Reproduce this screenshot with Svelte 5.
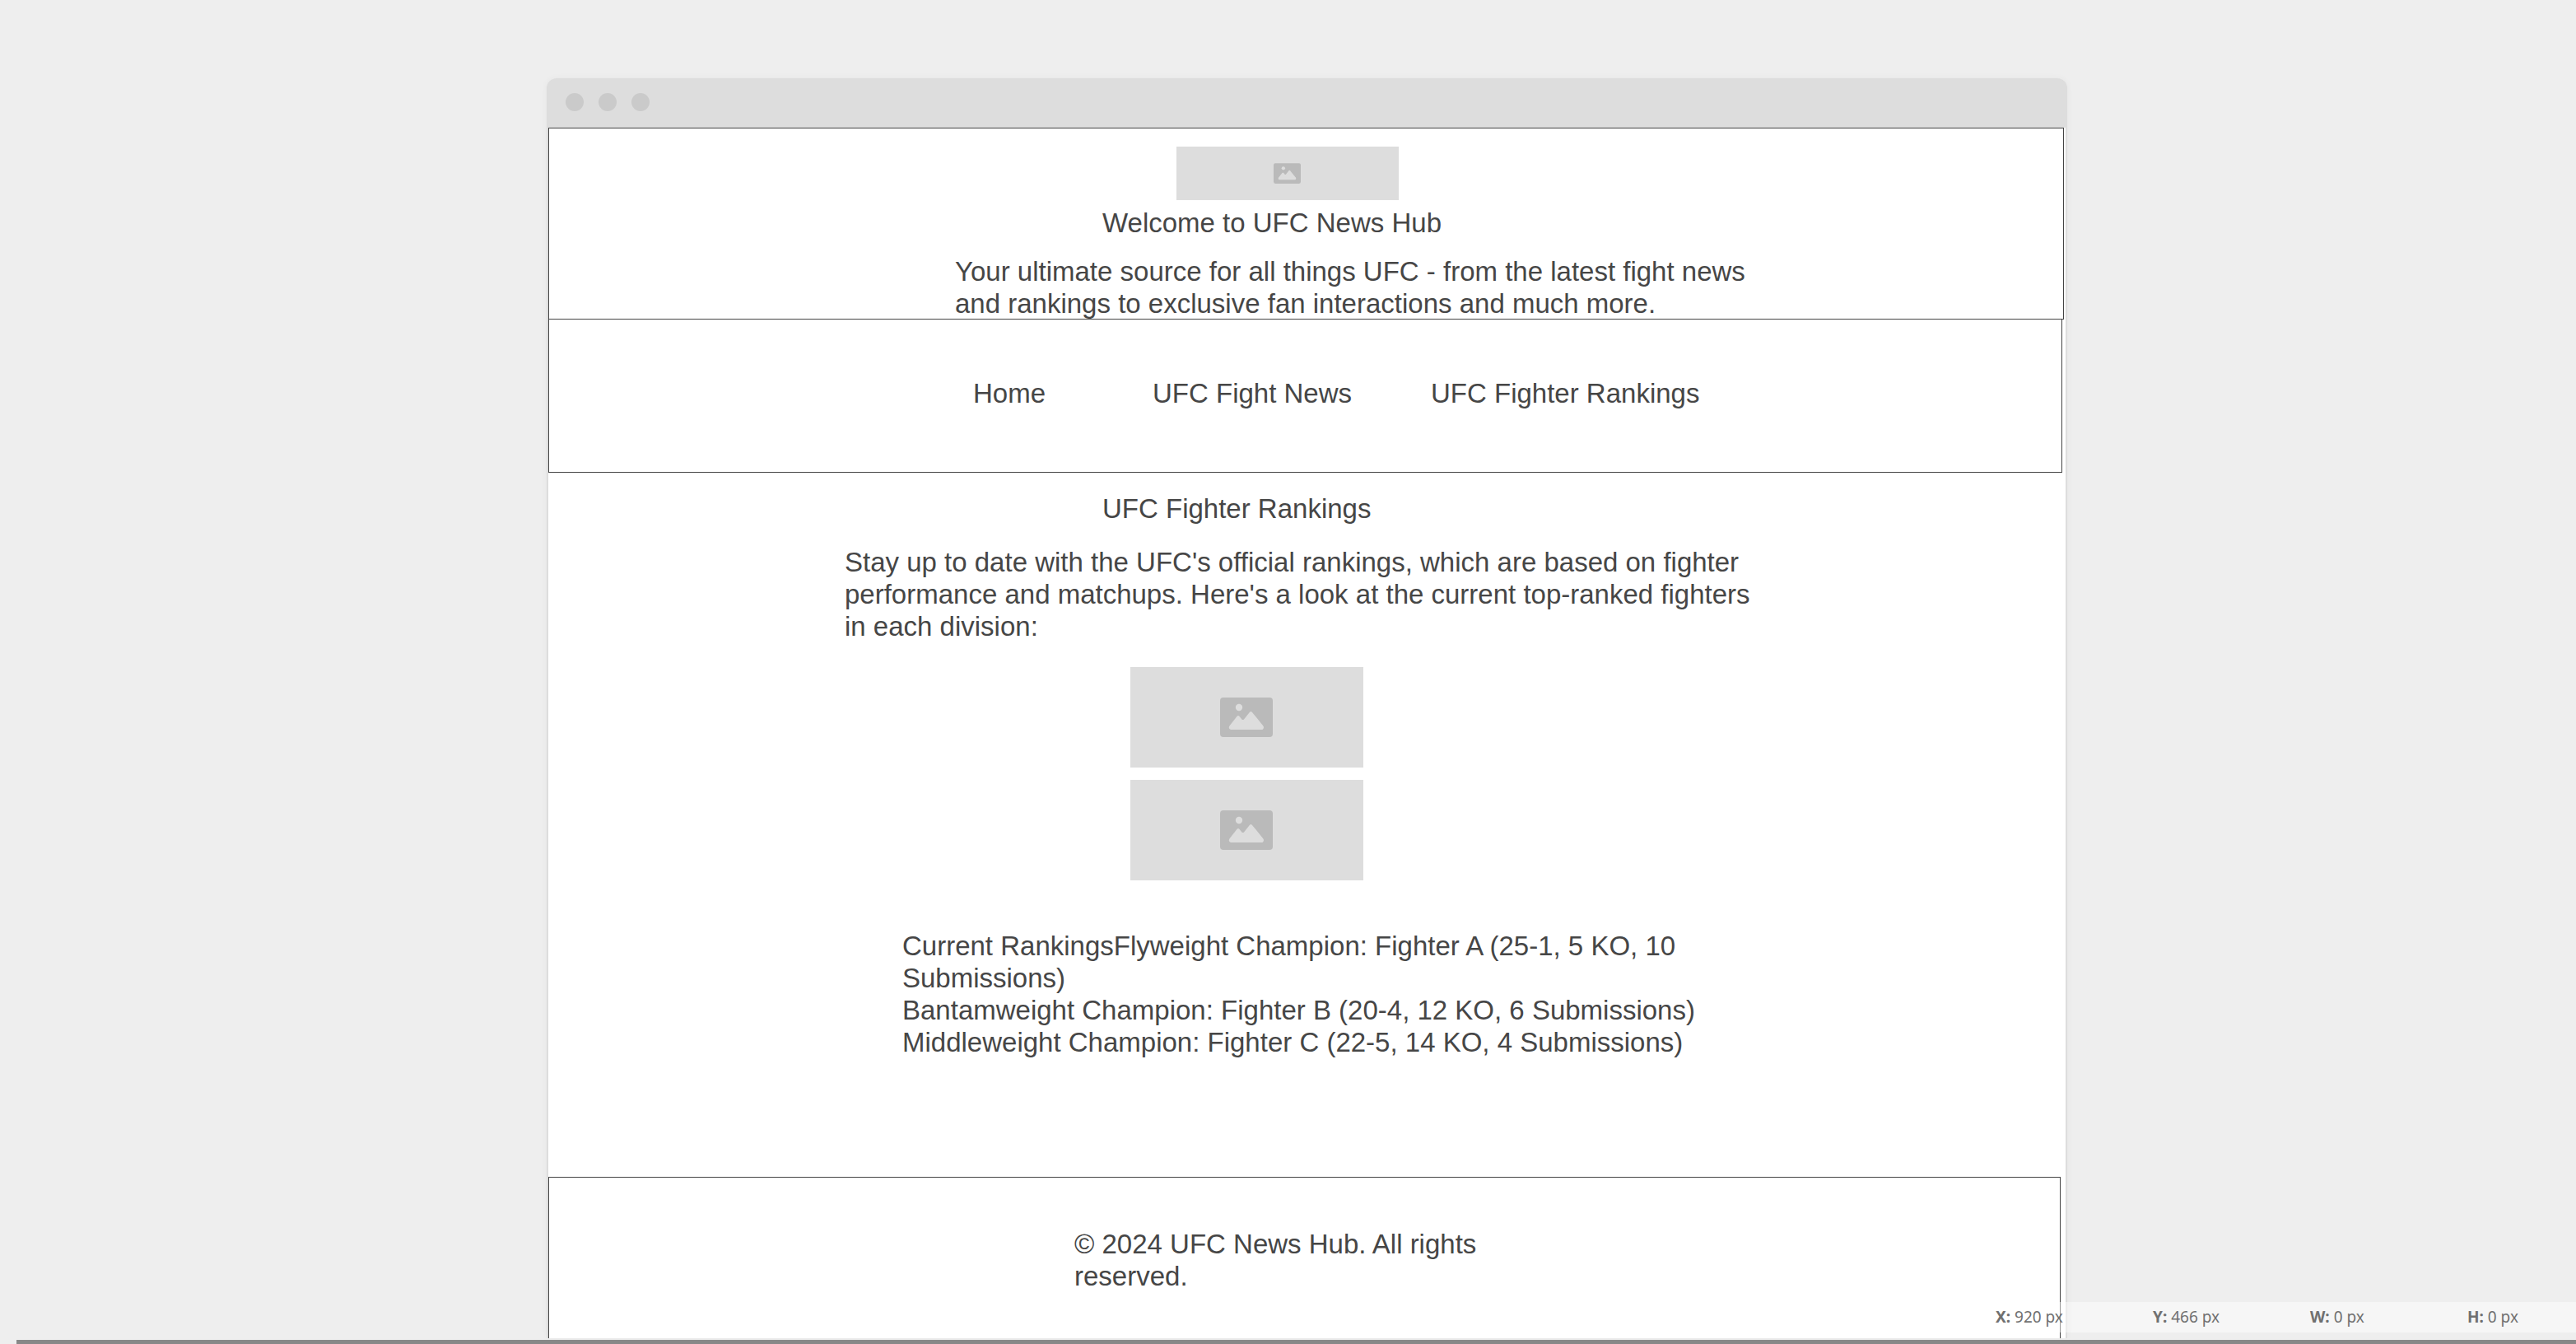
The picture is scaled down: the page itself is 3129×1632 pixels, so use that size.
<script>
  const links = ['Home', 'UFC Fight News', 'UFC Fighter Rankings'];
  const champions = [
    'Current RankingsFlyweight Champion: Fighter A (25-1, 5 KO, 10 Submissions)',
    'Bantamweight Champion: Fighter B (20-4, 12 KO, 6 Submissions)',
    'Middleweight Champion: Fighter C (22-5, 14 KO, 4 Submissions)'
  ];
  const readings = [
    ['X:', '920 px'],
    ['Y:', '466 px'],
    ['W:', '0 px'],
    ['H:', '0 px']
  ];
</script>

{#snippet placeholder(kind)}
  <div class="placeholder {kind}">
    <svg viewBox="0 0 64 48" aria-hidden="true">
      <rect width="64" height="48" rx="4" fill="#bababa" />
      <circle cx="23" cy="12" r="4.2" fill="#dddddd" />
      <path
        d="M11.4 34.4 20.4 23Q22 21 23.6 23L26.4 26.4Q27.7 27.8 29 26.4L35.8 17.9Q37.4 16 39 17.9L52.4 34.4Q54 37 51.4 39H13Q9.6 38 11.4 34.4Z"
        fill="#dddddd"
      />
    </svg>
  </div>
{/snippet}

<div class="page">
  <div class="window">
    <div class="titlebar">
      <span class="dot"></span>
      <span class="dot"></span>
      <span class="dot"></span>
    </div>
    <div class="content">
      <header>
        {@render placeholder('logo')}
        <h1>Welcome to UFC News Hub</h1>
        <p>
          Your ultimate source for all things UFC - from the latest fight news and rankings to
          exclusive fan interactions and much more.
        </p>
      </header>
      <nav>
        {#each links as link}
          <a href="#top">{link}</a>
        {/each}
      </nav>
      <main>
        <h2>UFC Fighter Rankings</h2>
        <p class="intro">
          Stay up to date with the UFC's official rankings, which are based on fighter performance
          and matchups. Here's a look at the current top-ranked fighters in each division:
        </p>
        <div class="gallery">
          {@render placeholder('photo')}
          {@render placeholder('photo')}
        </div>
        <ul>
          {#each champions as champion}
            <li>{champion}</li>
          {/each}
        </ul>
      </main>
      <footer><p>© 2024 UFC News Hub. All rights reserved.</p></footer>
    </div>
  </div>
  <div class="edge"></div>
  <div class="status">
    {#each readings as [name, value]}
      <span><b>{name}</b> {value}</span>
    {/each}
  </div>
</div>

<style>
  :global(body) {
    background: #eeeeee;
  }

  .page {
    position: relative;
    display: flex;
    flex-direction: column;
    box-sizing: border-box;
    min-height: 100vh;
    padding-top: 95px;
    color: #464646;
    font: 33px/39px 'Liberation Sans', Arial, sans-serif;
  }

  .window {
    display: flex;
    flex: 1;
    flex-direction: column;
    margin: 0 618px 2px 664px;
    border-radius: 12px 12px 0 0;
    box-shadow: 0 0 8px rgba(0, 0, 0, 0.04);
  }

  .titlebar {
    display: flex;
    gap: 18px;
    box-sizing: border-box;
    height: 60px;
    padding: 18px 23px;
    border-radius: 12px 12px 0 0;
    background: #dddddd;
  }

  .dot {
    width: 22px;
    height: 22px;
    border-radius: 50%;
    background: #cacaca;
  }

  .content {
    display: flex;
    flex: 1;
    flex-direction: column;
    border: solid #dddddd;
    border-width: 0 2px;
    background: #ffffff;
  }

  h1,
  h2,
  p,
  ul {
    margin: 0;
    padding: 0;
    font-size: inherit;
    font-weight: 400;
    list-style: none;
  }

  header,
  nav,
  footer {
    border: 1px solid #444444;
  }

  header {
    margin-right: 2px;
    padding-top: 22px;
  }

  header h1 {
    margin: 8px 0 20px 672px;
  }

  header p {
    max-width: 990px;
    margin: 0 0 -1px 493px;
  }

  .placeholder {
    display: flex;
    align-items: center;
    justify-content: center;
    box-sizing: border-box;
    padding-right: 1px;
    background: #dddddd;
  }

  .logo {
    width: 270px;
    height: 65px;
    margin-left: 762px;
  }

  .logo svg {
    width: 33px;
    height: 25px;
  }

  .photo {
    width: 283px;
    height: 122px;
  }

  .photo svg {
    width: 64px;
    height: 48px;
  }

  nav {
    display: grid;
    grid-template-columns: 218px 338px auto;
    margin: -1px 4px 0 0;
    padding: 70px 0 76px 515px;
  }

  nav a {
    color: inherit;
    text-decoration: none;
  }

  main {
    flex: 1;
    padding-top: 24px;
  }

  h2 {
    margin-left: 673px;
  }

  .intro {
    max-width: 1120px;
    margin: 26px 0 30px 360px;
  }

  .gallery {
    display: grid;
    gap: 15px;
    margin-left: 707px;
  }

  ul {
    max-width: 990px;
    margin: 60px 0 0 430px;
  }

  footer {
    box-sizing: border-box;
    height: 196px;
    margin-right: 6px;
    padding: 61px 0 0 638px;
    border-bottom: 0;
  }

  footer p {
    max-width: 510px;
  }

  .edge {
    height: 5px;
    margin-left: 20px;
    background: #888888;
  }

  .status {
    position: absolute;
    right: 0;
    bottom: 14px;
    display: grid;
    grid-template-columns: repeat(4, 191px);
    box-sizing: border-box;
    width: 725px;
    height: 37px;
    padding-left: 20px;
    overflow: hidden;
    background: rgba(255, 255, 255, 0.45);
    color: #707070;
    font: 19px/37px 'Noto Sans', sans-serif;
  }
</style>
